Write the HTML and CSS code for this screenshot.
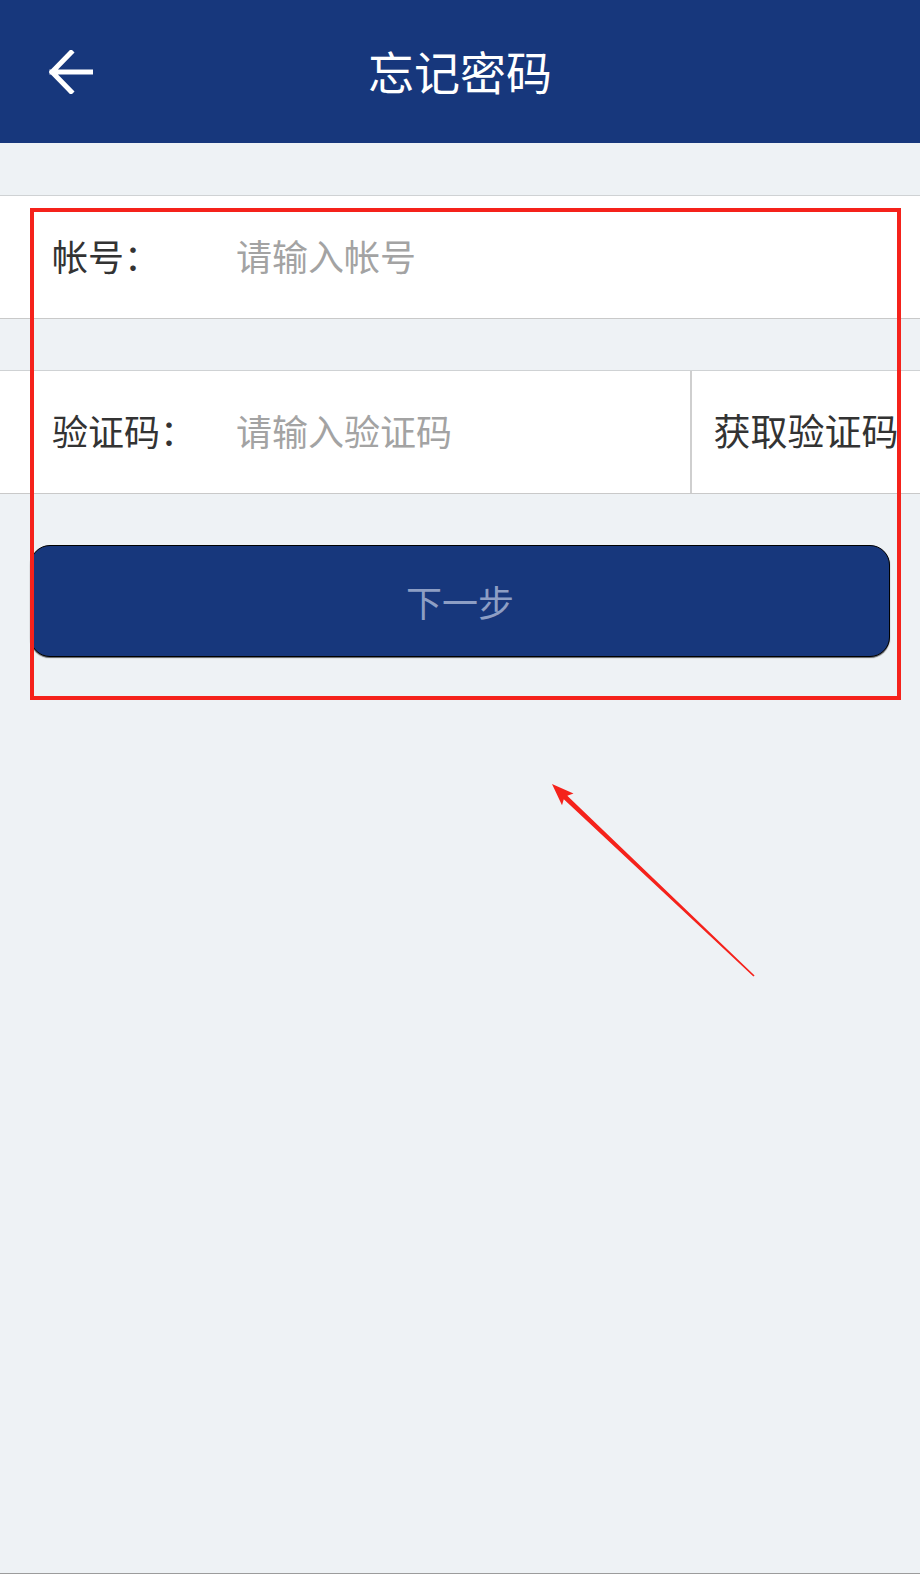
FILE: index.html
```html
<!DOCTYPE html>
<html lang="zh-CN">
<head>
    <meta charset="UTF-8">
    <meta name="viewport" content="width=device-width, initial-scale=1.0">
    <title>忘记密码</title>
    <link rel="stylesheet" href="styles.css">
</head>
<body>
    <div class="page">
        <header class="topbar">
            <a class="back" href="#">
                <svg width="44" height="44" viewBox="0 0 44 44">
                    <path d="M3 22 H42 M22 2.5 L3 22 L22 41.5" fill="none" stroke="#fff" stroke-width="5" stroke-linecap="square"/>
                </svg>
            </a>
            <h1 class="title">忘记密码</h1>
        </header>

        <div class="form">
            <div class="row">
                <label class="label" for="account">帐号：</label>
                <input class="field" id="account" type="text" placeholder="请输入帐号">
            </div>

            <div class="row">
                <label class="label" for="code">验证码：</label>
                <input class="field" id="code" type="text" placeholder="请输入验证码">
                <button class="getcode" type="button">获取验证码</button>
            </div>

            <button class="next" type="button" disabled>下一步</button>
        </div>

        <!-- annotation marks drawn over the screen -->
        <div class="markbox"></div>
        <svg class="markarrow" width="230" height="220" viewBox="0 0 230 220">
            <polygon points="12,14 33.5,23.5 27.3,25.7 214.6,205.4 213.4,206.6 23.8,29.3 22,35.2" fill="#f5221b"/>
        </svg>
    </div>
</body>
</html>
```

FILE: styles.css
```css
* {
    box-sizing: border-box;
}
body {
    margin: 0;
    background-color: #eef2f5;
    font-family: "Noto Sans CJK SC", "Noto Sans", sans-serif;
    overflow: hidden;
}
.page {
    position: relative;
    height: 1574px;
    border-bottom: 1px solid #9c9c9c;
}
.topbar {
    height: 143px;
    background-color: #17377c;
    display: flex;
    align-items: center;
    justify-content: center;
    position: relative;
}
.back {
    position: absolute;
    left: 49px;
    top: 50px;
    display: flex;
}
.title {
    margin: 0;
    color: #fff;
    font-size: 46px;
    font-weight: normal;
    padding-bottom: 4px;
}
.form {
    padding-top: 52px;
    display: flex;
    flex-direction: column;
    gap: 51px;
}
.row {
    height: 124px;
    background-color: #fff;
    border-top: 1px solid #cfd2d4;
    border-bottom: 1px solid #c9c9c9;
    display: flex;
    align-items: center;
    padding-left: 52px;
}
.label {
    width: 184px;
    flex: none;
    font-size: 36px;
    color: #333;
    padding-bottom: 4px;
}
.field {
    flex: 1;
    min-width: 0;
    border: none;
    outline: none;
    background: transparent;
    font-family: inherit;
    font-size: 36px;
    color: #333;
    padding: 0 0 4px;
}
.field::placeholder {
    color: #a3a3a3;
}
.getcode {
    width: 230px;
    height: 100%;
    flex: none;
    border: none;
    border-left: 2px solid #cfcfcf;
    background: #fff;
    font-family: inherit;
    font-size: 37px;
    color: #333;
    padding: 0 0 4px;
    white-space: nowrap;
}
.next {
    margin: 0 30px;
    height: 112px;
    border: 1px solid #000;
    border-radius: 20px;
    box-shadow: 0 1px 1px rgba(0, 0, 0, 0.6);
    background-color: #17377c;
    color: #8d9ec4;
    font-family: inherit;
    font-size: 36px;
}
.markbox {
    position: absolute;
    left: 30px;
    top: 208px;
    width: 871px;
    height: 492px;
    border: 4px solid #f5221b;
}
.markarrow {
    position: absolute;
    left: 540px;
    top: 770px;
}
```
